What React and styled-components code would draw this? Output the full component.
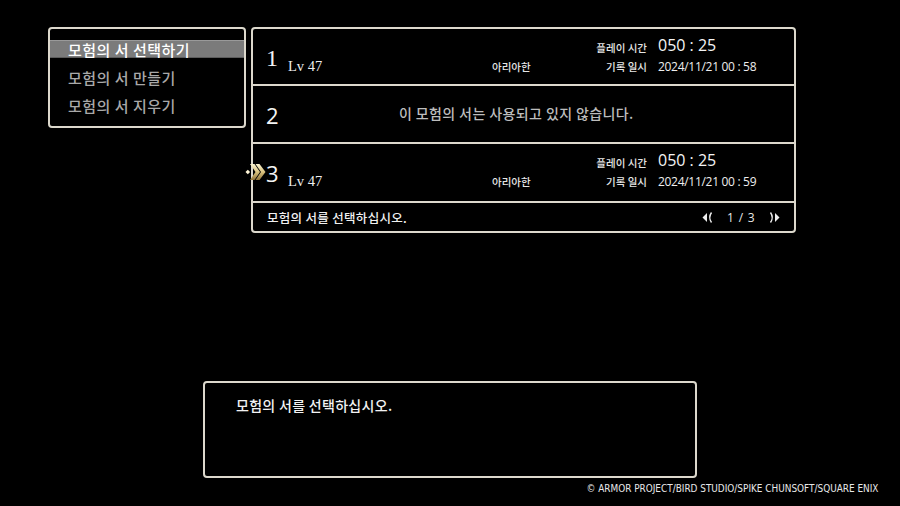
import React from "react";
import styled, { createGlobalStyle } from "styled-components";

const GlobalStyle = createGlobalStyle`
  html, body {
    margin: 0;
    padding: 0;
    background: #000;
  }
  body {
    font-family: "Noto Sans CJK KR", "Noto Sans", sans-serif;
    color: #f2f2f2;
  }
`;

const Screen = styled.div`
  width: 900px;
  height: 506px;
  background: #000;
  display: flex;
  flex-direction: column;
  overflow: hidden;
`;

const TopArea = styled.div`
  display: flex;
  align-items: flex-start;
  gap: 5px;
  padding: 27px 0 0 48px;
`;

const Frame = styled.div`
  box-sizing: border-box;
  border: 2px solid #dcd8cc;
  border-radius: 4px;
  background: #000;
`;

const Menu = styled(Frame)`
  width: 198px;
  height: 101px;
  display: flex;
  flex-direction: column;
  gap: 10px;
  padding: 11px 0 0;
`;

const MenuItem = styled.div`
  height: 18px;
  display: flex;
  align-items: center;
  padding-left: 18px;
  font-size: 15px;
  font-weight: 500;
  letter-spacing: 0.5px;
  color: ${({ $active }) => ($active ? "#ffffff" : "#a9a9a9")};
  background: ${({ $active }) => ($active ? "#7b7b7b" : "transparent")};
  border-top: 1px solid ${({ $active }) => ($active ? "#9a9a9a" : "transparent")};
  border-bottom: 1px solid ${({ $active }) => ($active ? "#5c5c5c" : "transparent")};
  box-sizing: border-box;
`;

const Panel = styled(Frame)`
  position: relative;
  width: 545px;
  height: 206px;
  display: flex;
  flex-direction: column;
`;

const SlotRow = styled.div`
  position: relative;
  height: ${({ $h }) => $h}px;
  border-bottom: 2px solid #dcd8cc;
  padding-left: 13px;
  display: grid;
  grid-template-columns: 22px 204px 60px 95px 11px auto;
  grid-template-rows: 19px 19px;
  align-content: start;
  padding-top: 9px;
  box-sizing: content-box;
`;

const EmptyRow = styled.div`
  height: 56px;
  border-bottom: 2px solid #dcd8cc;
  padding-left: 13px;
  display: flex;
  align-items: center;
`;

const SlotNumber = styled.div`
  grid-row: 1 / span 2;
  grid-column: 1;
  align-self: center;
  font-family: ${({ $serif }) =>
    $serif ? '"Liberation Serif", serif' : '"Open Sans", sans-serif'};
  font-size: ${({ $serif }) => ($serif ? "24px" : "22px")};
  line-height: 22px;
  color: #f4f4f4;
  margin-top: 2px;
`;

const Level = styled.div`
  grid-row: 2;
  grid-column: 2;
  font-family: "Liberation Serif", serif;
  font-size: 14.5px;
  line-height: 19px;
  color: #eeeeee;
`;

const HeroName = styled.div`
  grid-row: 2;
  grid-column: 3;
  font-size: 10.5px;
  font-weight: 500;
  line-height: 19px;
  color: #e6e6e6;
`;

const Label = styled.div`
  grid-row: ${({ $line }) => $line};
  grid-column: 4;
  text-align: right;
  font-size: 10.5px;
  font-weight: 500;
  line-height: 19px;
  color: #e6e6e6;
`;

const PlayTime = styled.div`
  grid-row: 1;
  grid-column: 6;
  font-family: "Open Sans", sans-serif;
  font-size: 16px;
  line-height: 19px;
  color: #f4f4f4;
  margin-top: -2px;
`;

const SavedAt = styled.div`
  grid-row: 2;
  grid-column: 6;
  font-family: "Open Sans", sans-serif;
  font-size: 12px;
  letter-spacing: -0.3px;
  line-height: 19px;
  color: #eeeeee;
`;

const EmptyMessage = styled.div`
  flex: 1;
  margin-right: 40px;
  margin-top: -2px;
  text-align: center;
  font-size: 14px;
  font-weight: 500;
  letter-spacing: 0.4px;
  color: #bdbdbd;
`;

const Footer = styled.div`
  height: 28px;
  display: flex;
  align-items: center;
  justify-content: space-between;
  padding: 0 14px 0 14px;
  font-size: 12.5px;
  font-weight: 500;
  letter-spacing: 0.3px;
  color: #f0f0f0;
`;

const Pager = styled.div`
  display: flex;
  align-items: center;
  font-family: "Open Sans", sans-serif;
  font-size: 12px;
  font-weight: 400;
  color: #e8e8e8;
`;

const PageText = styled.span`
  width: 54px;
  text-align: center;
  word-spacing: 1px;
`;

const Cursor = styled.svg`
  position: absolute;
  left: -8px;
  top: 18px;
`;

const MessageBox = styled(Frame)`
  margin: 148px 0 0 203px;
  width: 494px;
  height: 97px;
  padding: 12px 0 0 31px;
  font-size: 14px;
  font-weight: 500;
  letter-spacing: 0.3px;
  line-height: 20px;
  color: #f2f2f2;
`;

const Copyright = styled.div`
  align-self: flex-end;
  margin: 4px 22px 0 0;
  font-family: "DejaVu Sans Condensed", "Liberation Sans", sans-serif;
  font-size: 11px;
  line-height: 14px;
  color: #e8e8e8;
  transform: scaleX(0.9);
  transform-origin: right center;
  white-space: nowrap;
`;

const ArrowLeft = () => (
  <svg width="12" height="13" viewBox="0 0 12 13">
    <path d="M5 2 L0.5 6.5 L5 11 Z" fill="#eee" />
    <path d="M9.5 1.5 Q6 6.5 9.5 11.5" stroke="#eee" strokeWidth="1.4" fill="none" />
  </svg>
);

const ArrowRight = () => (
  <svg width="12" height="13" viewBox="0 0 12 13">
    <path d="M2.5 1.5 Q6 6.5 2.5 11.5" stroke="#eee" strokeWidth="1.4" fill="none" />
    <path d="M7 2 L11.5 6.5 L7 11 Z" fill="#eee" />
  </svg>
);

const GoldCursor = () => (
  <Cursor width="21" height="20" viewBox="0 0 21 20">
    <defs>
      <linearGradient id="gold" x1="0" y1="0" x2="0" y2="1">
        <stop offset="0" stopColor="#fbf4d0" />
        <stop offset="0.5" stopColor="#d9c27e" />
        <stop offset="1" stopColor="#8f733a" />
      </linearGradient>
    </defs>
    <path d="M0.5 10 L2.8 7.7 L5.1 10 L2.8 12.3 Z" fill="#fff6d8" />
    <path d="M5 2 L9.5 2 L15 10 L9.5 18 L5 18 L10.5 10 Z" fill="url(#gold)" />
    <path d="M10.5 2 L14.5 2 L20.5 10 L14.5 18 L10.5 18 L16 10 Z" fill="url(#gold)" />
  </Cursor>
);

const slots = [
  { no: 1, serif: true, level: "Lv 47", name: "아리아한", time: "050 : 25", at: "2024/11/21 00 : 58" },
  { no: 2, empty: true },
  { no: 3, level: "Lv 47", name: "아리아한", time: "050 : 25", at: "2024/11/21 00 : 59", selected: true },
];

const App = () => {
  return (
    <Screen>
      <GlobalStyle />
      <TopArea>
        <Menu>
          <MenuItem $active>모험의 서 선택하기</MenuItem>
          <MenuItem>모험의 서 만들기</MenuItem>
          <MenuItem>모험의 서 지우기</MenuItem>
        </Menu>
        <Panel>
          {slots.map((s, i) =>
            s.empty ? (
              <EmptyRow key={s.no}>
                <SlotNumber>{s.no}</SlotNumber>
                <EmptyMessage>이 모험의 서는 사용되고 있지 않습니다.</EmptyMessage>
              </EmptyRow>
            ) : (
              <SlotRow key={s.no} $h={i === 0 ? 46 : 48}>
                {s.selected && <GoldCursor />}
                <SlotNumber $serif={s.serif}>{s.no}</SlotNumber>
                <Level>{s.level}</Level>
                <HeroName>{s.name}</HeroName>
                <Label $line={1}>플레이 시간</Label>
                <PlayTime>{s.time}</PlayTime>
                <Label $line={2}>기록 일시</Label>
                <SavedAt>{s.at}</SavedAt>
              </SlotRow>
            )
          )}
          <Footer>
            <span>모험의 서를 선택하십시오.</span>
            <Pager>
              <ArrowLeft />
              <PageText>1 / 3</PageText>
              <ArrowRight />
            </Pager>
          </Footer>
        </Panel>
      </TopArea>
      <MessageBox>모험의 서를 선택하십시오.</MessageBox>
      <Copyright>© ARMOR PROJECT/BIRD STUDIO/SPIKE CHUNSOFT/SQUARE ENIX</Copyright>
    </Screen>
  );
};

export default App;
